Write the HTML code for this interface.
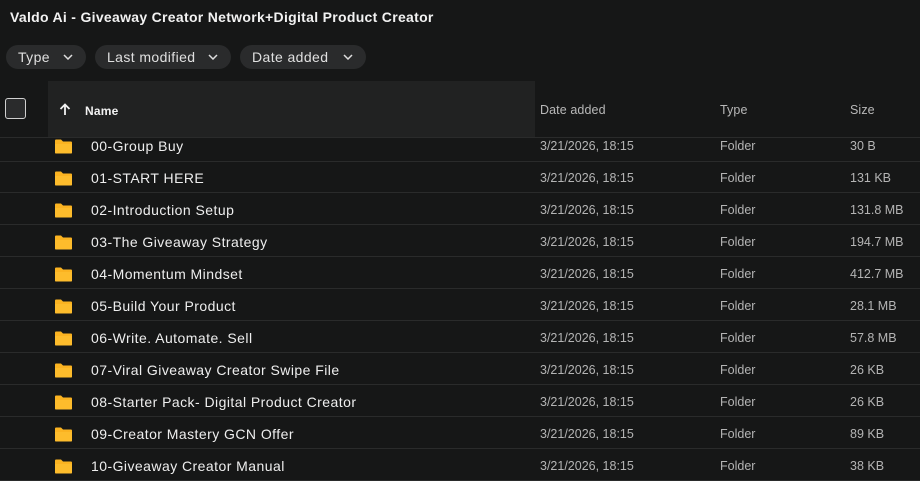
<!DOCTYPE html>
<html><head><meta charset="utf-8"><style>
*{margin:0;padding:0;box-sizing:border-box}
body{width:920px;height:479px;overflow:hidden;background:#161717;font-family:"Liberation Sans",Arial,sans-serif;color:#e8e8e8;position:relative}
.title{position:absolute;left:10px;top:9px;font-size:14px;font-weight:bold;color:#f2f2f2;letter-spacing:0.3px}
.pill{position:absolute;top:45px;height:24px;border-radius:12px;background:#2a2b2c;font-size:14px;color:#e0e0e0;line-height:24px;padding-left:12px;letter-spacing:0.4px}
.pill svg{position:absolute;right:13px;top:9px}
.hdr{position:absolute;left:48px;top:81px;width:487px;height:56px;background:#212222}
.cb{position:absolute;left:5px;top:98px;width:21px;height:21px;border:1.5px solid #d0d0d0;border-radius:3px;background:#2a2b2c}
.hname{position:absolute;left:85px;top:104px;font-size:12px;font-weight:bold;color:#f2f2f2;letter-spacing:0.2px}
.hcol{position:absolute;top:103px;font-size:12.5px;color:#b8b8b8;letter-spacing:0.1px}
.hline{position:absolute;left:0;top:137px;width:920px;height:1px;background:#2a2b2b}
.row{position:absolute;left:0;width:920px;height:32px;border-bottom:1px solid #2a2b2b}
.row .f{position:absolute;left:54px;width:19px;height:15px}
.row .n{position:absolute;left:91px;font-size:14px;color:#eeeeee;letter-spacing:0.45px}
.row .c{position:absolute;font-size:12.5px;color:#b4b4b4}
</style></head><body>
<div class="title">Valdo Ai - Giveaway Creator Network+Digital Product Creator</div>
<div class="pill" style="left:6px;width:80px">Type<svg width="10" height="6" viewBox="0 0 10 6"><path d="M1 1l4 4 4-4" stroke="#ddd" stroke-width="1.5" fill="none"/></svg></div>
<div class="pill" style="left:95px;width:136px">Last modified<svg width="10" height="6" viewBox="0 0 10 6"><path d="M1 1l4 4 4-4" stroke="#ddd" stroke-width="1.5" fill="none"/></svg></div>
<div class="pill" style="left:240px;width:126px">Date added<svg width="10" height="6" viewBox="0 0 10 6"><path d="M1 1l4 4 4-4" stroke="#ddd" stroke-width="1.5" fill="none"/></svg></div>
<div class="hdr"></div>
<div class="cb"></div>
<svg style="position:absolute;left:59px;top:103px" width="12" height="13" viewBox="0 0 12 13"><path d="M6 12V2M1.5 6L6 1.5 10.5 6" stroke="#f2f2f2" stroke-width="1.8" fill="none"/></svg>
<div class="hname">Name</div>
<div class="hcol" style="left:540px">Date added</div>
<div class="hcol" style="left:720px">Type</div>
<div class="hcol" style="left:850px">Size</div>
<div class="hline"></div>
<div id="rows"></div>
<script>
var d=[["00-Group Buy","30 B"],["01-START HERE","131 KB"],["02-Introduction Setup","131.8 MB"],["03-The Giveaway Strategy","194.7 MB"],["04-Momentum Mindset","412.7 MB"],["05-Build Your Product","28.1 MB"],["06-Write. Automate. Sell","57.8 MB"],["07-Viral Giveaway Creator Swipe File","26 KB"],["08-Starter Pack- Digital Product Creator","26 KB"],["09-Creator Mastery GCN Offer","89 KB"],["10-Giveaway Creator Manual","38 KB"]];
var h="";
d.forEach(function(r,i){
 var top=i==0?137:161+32*(i-1);var ht=i==0?25:32;var cy=(i==0?146:178+32*(i-1))-top;
 h+='<div class="row" style="top:'+top+'px;height:'+ht+'px">'+
 '<svg class="f" style="top:'+(cy-7)+'px" viewBox="0 0 19 15"><path d="M1 1.5Q1 0.5 2 0.5H7L9 2.5H17Q18 2.5 18 3.5V13.5Q18 14.5 17 14.5H2Q1 14.5 1 13.5Z" fill="#fbb321"/><path d="M1 5H18V13.5Q18 14.5 17 14.5H2Q1 14.5 1 13.5Z" fill="#fdbc2c"/></svg>'+
 '<div class="n" style="top:'+(cy-8)+'px">'+r[0]+'</div>'+
 '<div class="c" style="left:540px;top:'+(cy-7)+'px">3/21/2026, 18:15</div>'+
 '<div class="c" style="left:720px;top:'+(cy-7)+'px">Folder</div>'+
 '<div class="c" style="left:850px;top:'+(cy-7)+'px">'+r[1]+'</div></div>';
});
document.getElementById("rows").innerHTML=h;
</script>
</body></html>
